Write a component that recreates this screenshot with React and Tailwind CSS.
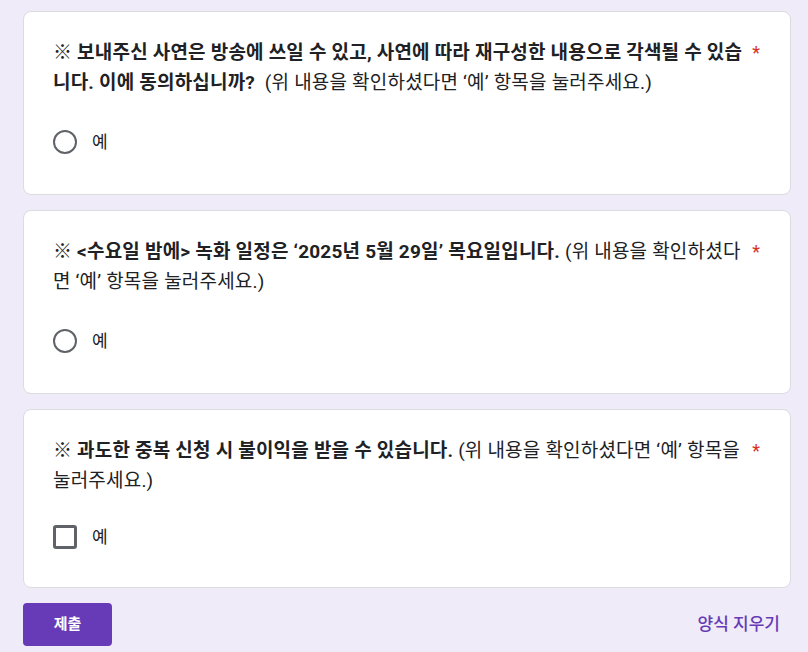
const questions = [
  {
    bold: "※ 보내주신 사연은 방송에 쓰일 수 있고, 사연에 따라 재구성한 내용으로 각색될 수 있습니다. 이에 동의하십니까?",
    note: "\u00a0 (위 내용을 확인하셨다면 ‘예’ 항목을 눌러주세요.)",
    type: "radio",
  },
  {
    bold: "※ <수요일 밤에> 녹화 일정은 ‘2025년 5월 29일’ 목요일입니다.",
    note: " (위 내용을 확인하셨다면 ‘예’ 항목을 눌러주세요.)",
    type: "radio",
  },
  {
    bold: "※ 과도한 중복 신청 시 불이익을 받을 수 있습니다.",
    note: " (위 내용을 확인하셨다면 ‘예’ 항목을 눌러주세요.)",
    type: "checkbox",
  },
];

const Question = ({ q }) => (
  <div
    className={`bg-white border border-[#dadce0] rounded-lg pl-[29px] pr-[30px] pt-[26px] ${
      q.type === "checkbox" ? "pb-[37px]" : "pb-[39px]"
    }`}
  >
    <div className="flex items-start">
      <p className="flex-1 text-[19px] leading-[30px] tracking-[0.2px] text-[#202124]">
        <span className="font-bold">{q.bold}</span>
        <span>{q.note}</span>
      </p>
      <span className="text-[#d93025] text-[18px] leading-[30px] pl-[6px]">*</span>
    </div>
    <div
      className={`flex items-center gap-[15px] ${
        q.type === "checkbox" ? "mt-[28px]" : "mt-[31px]"
      }`}
    >
      {q.type === "radio" ? (
        <div className="w-[24px] h-[24px] rounded-full border-[2.5px] border-[#5f6368]" />
      ) : (
        <div className="w-[24px] h-[24px] rounded-[3px] border-[3px] border-[#5f6368]" />
      )}
      <span className="text-[17px] leading-[26px] text-[#202124]">예</span>
    </div>
  </div>
);

export default function App() {
  return (
    <div
      className="min-h-screen bg-[#f0ebf8] pt-[11px]"
      style={{ fontFamily: 'Roboto, "Noto Sans CJK KR", Arial, sans-serif' }}
    >
      <div className="ml-[23px] w-[768px] flex flex-col gap-[15px]">
        {questions.map((q, i) => (
          <Question key={i} q={q} />
        ))}
        <div className="flex items-center justify-between">
          <button className="w-[89px] h-[43px] rounded-[4px] bg-[#673ab7] text-white font-bold text-[15px]">
            제출
          </button>
          <span className="text-[#673ab7] text-[17px] font-medium pr-[11px]">
            양식 지우기
          </span>
        </div>
      </div>
    </div>
  );
}
